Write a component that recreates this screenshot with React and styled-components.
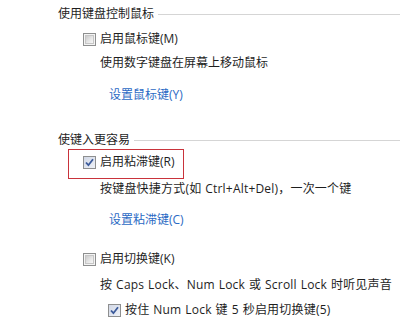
import React from "react";
import styled, { createGlobalStyle } from "styled-components";

const Global = createGlobalStyle`
  html, body { margin: 0; padding: 0; background: #ffffff; }
  body { font-family: "Open Sans", "Noto Sans CJK SC", sans-serif; font-size: 12px; color: #1e1e1e; }
`;

const Page = styled.div`
  width: 400px;
  height: 320px;
  overflow: hidden;
  padding: 6px 0 0 58px;
  box-sizing: border-box;
  display: flex;
  flex-direction: column;
`;

const Heading = styled.div`
  display: flex;
  align-items: center;
  gap: 4px;
  height: 16px;
  line-height: 16px;
  margin-top: ${(p) => p.$mt || 0}px;
  white-space: nowrap;
  &::after {
    content: "";
    flex: 1;
    height: 1px;
    background: #d5d5d5;
    margin-top: 1px;
  }
`;

const Row = styled.label`
  display: flex;
  align-items: center;
  gap: 4px;
  height: 16px;
  line-height: 16px;
  margin-left: ${(p) => p.$indent}px;
  margin-top: ${(p) => p.$mt || 0}px;
  white-space: pre;
  letter-spacing: ${(p) => (p.$wide ? "0.2px" : "0")};
  word-spacing: ${(p) => (p.$wide ? "0.6px" : "0")};
`;

const Text = styled.div`
  height: 16px;
  line-height: 16px;
  margin-left: ${(p) => p.$indent}px;
  margin-top: ${(p) => p.$mt || 0}px;
  white-space: pre;
  letter-spacing: ${(p) => (p.$wide ? "0.2px" : "0")};
  word-spacing: ${(p) => (p.$wide ? "0.6px" : "0")};
`;

const Link = styled.a`
  display: block;
  height: 16px;
  line-height: 16px;
  margin-left: ${(p) => p.$indent}px;
  margin-top: ${(p) => p.$mt || 0}px;
  color: #2b6ac4;
  text-decoration: none;
  white-space: nowrap;
`;

const Highlight = styled.div`
  width: 116px;
  height: 30px;
  box-sizing: border-box;
  border: 1px solid #c9333b;
  margin-left: 10px;
  margin-top: 1px;
  padding: 4px 0 0 14px;
`;

const Box = styled.span`
  width: 13px;
  height: 13px;
  box-sizing: border-box;
  border: 1px solid #8e8f8f;
  background: #f4f4f4;
  padding: 1px;
  flex: none;
  display: inline-flex;
  &::before {
    content: "";
    flex: 1;
    border: 1px solid #c6c6c6;
    background: linear-gradient(135deg, #cbcbcb 0%, #e6e6e6 55%, #f7f7f7 100%);
  }
`;

const CheckedBox = styled.span`
  width: 13px;
  height: 13px;
  box-sizing: border-box;
  border: 1px solid #8e8f8f;
  background: linear-gradient(135deg, #d2d8e6 0%, #eef1f7 100%);
  flex: none;
  display: inline-flex;
  align-items: center;
  justify-content: center;
`;

function Checkbox({ checked }) {
  if (!checked) return <Box />;
  return (
    <CheckedBox>
      <svg width="9" height="9" viewBox="0 0 9 9">
        <path d="M1 4.5 L3.4 7.2 L8 1.2" fill="none" stroke="#3b5a9a" strokeWidth="1.8" />
      </svg>
    </CheckedBox>
  );
}

export default function App() {
  return (
    <>
      <Global />
      <Page>
        <Heading>使用键盘控制鼠标</Heading>
        <Row $indent={25} $mt={9}>
          <Checkbox />
          启用鼠标键(M)
        </Row>
        <Text $indent={42} $mt={8}>使用数字键盘在屏幕上移动鼠标</Text>
        <Link $indent={51} $mt={16}>设置鼠标键(Y)</Link>

        <Heading $mt={29}>使键入更容易</Heading>
        <Highlight>
          <Row $indent={0}>
            <Checkbox checked />
            启用粘滞键(R)
          </Row>
        </Highlight>
        <Text $indent={42} $mt={2} $wide>按键盘快捷方式(如 Ctrl+Alt+Del)，一次一个键</Text>
        <Link $indent={51} $mt={15}>设置粘滞键(C)</Link>

        <Row $indent={25} $mt={23}>
          <Checkbox />
          启用切换键(K)
        </Row>
        <Text $indent={42} $mt={10} $wide>按 Caps Lock、Num Lock 或 Scroll Lock 时听见声音</Text>
        <Row $indent={50} $mt={9} $wide>
          <Checkbox checked />
          按住 Num Lock 键 5 秒启用切换键(5)
        </Row>
      </Page>
    </>
  );
}
